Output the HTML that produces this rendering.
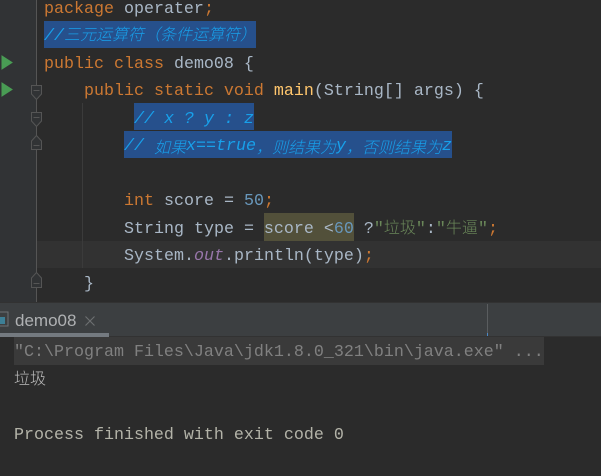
<!DOCTYPE html>
<html><head><meta charset="utf-8">
<style>
html,body{margin:0;padding:0;width:601px;height:476px;overflow:hidden;background:#2b2b2b}
.a{position:absolute}
.l{position:absolute;white-space:pre;font:16.67px/27px "Liberation Mono","Noto Sans CJK SC",monospace;color:#a9b7c6;height:27px}
.k{color:#cc7832}.n{color:#6897bb}.s{color:#6a8759}.f{color:#ffc66d}.o{color:#9876aa;font-style:italic}
.c{color:#18a0ea;font-style:italic}
.z{font-size:16px;line-height:0;font-family:"Noto Sans CJK SC","Liberation Sans",sans-serif;font-weight:300}
.p{line-height:27px}
.sel{position:absolute;background:#26508c}
</style></head>
<body>
<div class="a" style="left:0;top:0;width:36px;height:303px;background:#313335"></div>
<div class="a" style="left:36px;top:0;width:1px;height:302px;background:#555555"></div>
<div class="a" style="left:37px;top:241px;width:564px;height:27px;background:#323232"></div>
<div class="a" style="left:82px;top:103px;width:1px;height:165px;background:#3b3b3b"></div>
<div class="sel" style="left:44px;top:21px;width:212px;height:27px"></div>
<div class="sel" style="left:134px;top:103px;width:120px;height:27px"></div>
<div class="sel" style="left:124px;top:131px;width:328px;height:27px"></div>
<div class="a" style="left:264px;top:213px;width:90px;height:28px;background:#52503a"></div>

<svg class="a" style="left:0;top:0" width="44" height="303" fill="none" stroke="#555" stroke-width="1">
<path d="M2 56V69L12 62.500Z" fill="#499c54" stroke="#499c54"/>
<path d="M2 83V96L12 89.500Z" fill="#499c54" stroke="#499c54"/>
<g fill="#313335">
<path d="M31.500 85.500h10v8.500l-5 5.500-5-5.500z"/><path d="M33.500 90.500h6"/>
<path d="M31.500 112.500h10v8.500l-5 5.500-5-5.500z"/><path d="M33.500 117.500h6"/>
<path d="M31.500 149.500h10v-8.500l-5-5.500-5 5.500z"/><path d="M33.500 145.500h6"/>
<path d="M31.500 287.500h10v-9.500l-5-5.500-5 5.500z"/><path d="M33.500 283.500h6"/>
</g>
</svg>

<div class="l" style="left:44px;top:-4px"><span class="k">package</span> operater<span class="k">;</span></div>
<div class="l c" style="left:44px;top:23px">//<span class="z">三元运算符（条件运算符）</span></div>
<div class="l" style="left:44px;top:51px"><span class="k">public class</span> demo08 {</div>
<div class="l" style="left:84px;top:78px"><span class="k">public static void</span> <span class="f">main</span>(String[] args) {</div>
<div class="l c" style="left:134px;top:106px">// x ? y : z</div>
<div class="l c" style="left:124px;top:133px">//<span class="a z p" style="left:30px;top:0">如果</span><span class="a" style="left:62px;top:0">x==true</span><span class="a z p" style="left:132px;top:0">，则结果为</span><span class="a" style="left:212px;top:0">y</span><span class="a z p" style="left:222px;top:0">，否则结果为</span><span class="a" style="left:318px;top:0">z</span></div>
<div class="l" style="left:124px;top:188px"><span class="k">int</span> score = <span class="n">50</span><span class="k">;</span></div>
<div class="l" style="left:124px;top:216px">String type = score &lt;<span class="n">60</span> ?<span class="s">"<span class="z">垃圾</span>"</span>:<span class="s">"<span class="z">牛逼</span>"</span><span class="k">;</span></div>
<div class="l" style="left:124px;top:243px">System.<span class="o">out</span>.println(type)<span class="k">;</span></div>
<div class="l" style="left:84px;top:271px">}</div>

<div class="a" style="left:0;top:302px;width:601px;height:1px;background:#323232"></div>
<div class="a" style="left:0;top:303px;width:601px;height:33px;background:#3c3f41"></div>
<div class="a" style="left:0;top:336px;width:601px;height:1px;background:#323232"></div>
<div class="a" style="left:0;top:333px;width:109px;height:4px;background:#747a80"></div>
<div class="a" style="left:487px;top:304px;width:1px;height:31px;background:#5a5d5f"></div>
<div class="a" style="left:487px;top:333px;width:1px;height:3px;background:#4a88c7"></div>
<svg class="a" style="left:0;top:310px" width="12" height="20"><rect x="-3" y="2" width="11" height="14" fill="none" stroke="#6e7275"/><rect x="0" y="7" width="5" height="7" fill="#3d7f96"/></svg>
<div class="a" style="left:15px;top:310px;font:17px/22px 'Liberation Sans',sans-serif;color:#afb1b3;white-space:pre">demo08</div>
<svg class="a" style="left:84px;top:315px" width="12" height="12" stroke="#6e7072" stroke-width="1.100"><path d="M1.500 1.500L10.500 10.500M10.500 1.500L1.500 10.500"/></svg>

<div class="a" style="left:14px;top:337px;width:530px;height:28px;background:#3a3a3a"></div>
<div class="l" style="left:14px;top:339px;color:#808080">"C:\Program Files\Java\jdk1.8.0_321\bin\java.exe" ...</div>
<div class="l" style="left:14px;top:367px;color:#bbbbbb"><span class="z">垃圾</span></div>
<div class="l" style="left:14px;top:422px"><span style="color:#b3b3a8">Process finished with exit code 0</span></div>
</body></html>
